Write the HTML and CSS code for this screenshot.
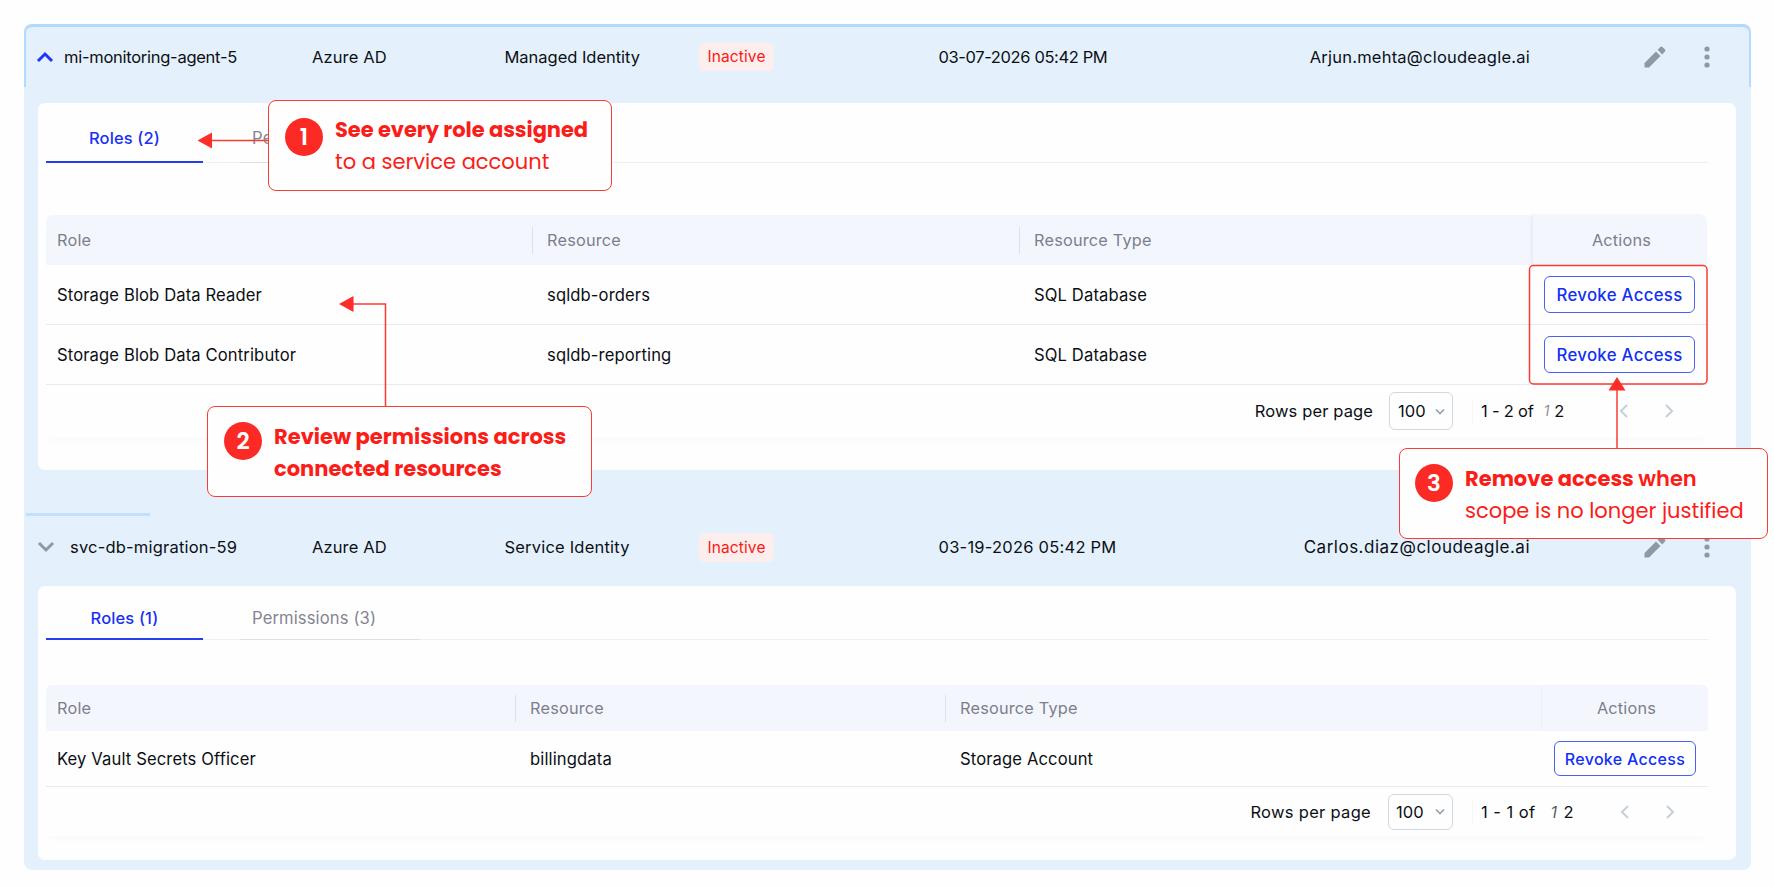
FILE: index.html
```html
<!DOCTYPE html>
<html lang="en">
<head>
  <meta charset="UTF-8">
  <meta name="viewport" content="width=device-width, initial-scale=1.0">
  <title>Service Accounts</title>
  <link rel="stylesheet" href="styles.css">
</head>
<body>
  <main class="accounts">
    <section class="account account-first">
      <div class="account-row">
        <svg class="toggle open" viewBox="0 0 18 12"><path d="M2 10 9 3l7 7"/></svg>
        <span class="name">mi-monitoring-agent-5</span>
        <span class="source">Azure AD</span>
        <span class="kind">Managed Identity</span>
        <span class="badge">Inactive</span>
        <span class="date">03-07-2026 05:42 PM</span>
        <span class="owner">Arjun.mehta@cloudeagle.ai</span>
        <svg class="pencil" viewBox="0 0 22 22"><path d="M0.500 17V21.500h4.500L16.500 10l-4.500-4.500zM21 5.600a1.500 1.500 0 0 0 0-2L18.400 1a1.500 1.500 0 0 0-2 0l-2.800 2.800 4.600 4.600z"/></svg>
        <svg class="dots" viewBox="0 0 6 22"><circle cx="3" cy="3" r="2.6"/><circle cx="3" cy="11" r="2.6"/><circle cx="3" cy="19" r="2.6"/></svg>
      </div>
      <div class="panel">
        <div class="tabs">
          <div class="tab active">Roles (2)</div>
          <div class="tab permissions">Permissions</div>
        </div>
        <div class="table">
          <div class="tr th">
            <span>Role</span><span>Resource</span><span>Resource Type</span><span class="actions">Actions</span>
          </div>
          <div class="tr">
            <span>Storage Blob Data Reader</span><span>sqldb-orders</span><span>SQL Database</span>
            <span class="actions"><button>Revoke Access</button></span>
          </div>
          <div class="tr">
            <span>Storage Blob Data Contributor</span><span>sqldb-reporting</span><span>SQL Database</span>
            <span class="actions"><button>Revoke Access</button></span>
          </div>
          <div class="pagination">
            <span class="per-page">Rows per page</span>
            <div class="select">100 <svg viewBox="0 0 10 7"><path d="M1 1.5l4 4 4-4"/></svg></div>
            <div class="range"><span>1 - 2 of</span><i>1</i><span>2</span></div>
            <svg class="page-nav" viewBox="0 0 28 16"><path d="M17 2l-6 6 6 6"/></svg>
            <svg class="page-nav" viewBox="0 0 28 16"><path d="M11 2l6 6-6 6"/></svg>
          </div>
        </div>
      </div>
    </section>

    <section class="account account-second">
      <div class="account-row">
        <svg class="toggle" viewBox="0 0 18 12"><path d="M2 2l7 7 7-7"/></svg>
        <span class="name">svc-db-migration-59</span>
        <span class="source">Azure AD</span>
        <span class="kind">Service Identity</span>
        <span class="badge">Inactive</span>
        <span class="date">03-19-2026 05:42 PM</span>
        <span class="owner">Carlos.diaz@cloudeagle.ai</span>
        <svg class="pencil" viewBox="0 0 22 22"><path d="M0.500 17V21.500h4.500L16.500 10l-4.500-4.500zM21 5.600a1.500 1.500 0 0 0 0-2L18.400 1a1.500 1.500 0 0 0-2 0l-2.800 2.800 4.600 4.600z"/></svg>
        <svg class="dots" viewBox="0 0 6 22"><circle cx="3" cy="3" r="2.6"/><circle cx="3" cy="11" r="2.6"/><circle cx="3" cy="19" r="2.6"/></svg>
      </div>
      <div class="panel">
        <div class="tabs">
          <div class="tab active">Roles (1)</div>
          <div class="tab permissions">Permissions (3)</div>
        </div>
        <div class="table">
          <div class="tr th">
            <span>Role</span><span>Resource</span><span>Resource Type</span><span class="actions">Actions</span>
          </div>
          <div class="tr">
            <span>Key Vault Secrets Officer</span><span>billingdata</span><span>Storage Account</span>
            <span class="actions"><button>Revoke Access</button></span>
          </div>
          <div class="pagination">
            <span class="per-page">Rows per page</span>
            <div class="select">100 <svg viewBox="0 0 10 7"><path d="M1 1.5l4 4 4-4"/></svg></div>
            <div class="range"><span>1 - 1 of</span><i>1</i><span>2</span></div>
            <svg class="page-nav" viewBox="0 0 28 16"><path d="M17 2l-6 6 6 6"/></svg>
            <svg class="page-nav" viewBox="0 0 28 16"><path d="M11 2l6 6-6 6"/></svg>
          </div>
        </div>
      </div>
    </section>
  </main>

  <!-- arrows and the highlight frame over the tables -->
  <svg class="arrows" viewBox="0 0 1774 887">
    <rect x="1529.5" y="265.5" width="177.5" height="118.5" rx="4"/>
    <path d="M269 140.5H210M385.500 406V304H351M1617 449V388"/>
    <path class="head" d="M197.500 140.500l14.500-8v16zM339 304l14.500-8v16zM1617 377l-8.500 13.500h17z"/>
  </svg>

  <div class="callout callout-1">
    <span class="number">1</span>
    <p><b>See every role assigned</b><br><span>to a service account</span></p>
  </div>
  <div class="callout callout-2">
    <span class="number">2</span>
    <p><b>Review permissions across</b><br><b>connected resources</b></p>
  </div>
  <div class="callout callout-3">
    <span class="number">3</span>
    <p><b>Remove access <em>when</em></b><br><span>scope is no longer justified</span></p>
  </div>
</body>
</html>
```

FILE: styles.css
```css
* { margin: 0; padding: 0; box-sizing: border-box; }
body {
  position: relative;
  width: 1774px; height: 887px;
  padding-top: 24px;
  overflow: hidden;
  background: #fefefe;
  color: #0c0f14;
  font-family: Inter, "Liberation Sans", sans-serif;
  font-size: 16.6px;
  line-height: 24px;
  letter-spacing: 0.12px;
  white-space: nowrap;
}
svg { display: block; flex: none; }

.accounts {
  width: 1727px;
  margin-left: 24px;
  padding-bottom: 10px;
  background: #e4f1fd;
  border-radius: 8px;
}

.account-row {
  display: grid;
  grid-template-columns: 40px 248px 192.500px 194.500px 239.500px 372px 219.500px 174px 1fr;
  align-items: center;
  height: 64px;
  border-bottom: 1px solid #e4eef5;
  font-size: 16.5px;
}
.account-first .account-row {
  border-top: 3px solid #b3d9fd;
  box-shadow: inset 2px 0 #b3d9fd, inset -2px 0 #b3d9fd;
  border-radius: 8px 8px 0 0;
}
.account-second {
  margin-top: 43px;
}
.account-second::before {
  content: "";
  display: block;
  width: 124px; height: 3px;
  margin-left: 2px;
  background: #bfe1fd;
}
.account-second .account-row { height: 61px; padding-top: 2px; }

.toggle {
  width: 18px; height: 12px;
  margin-left: 13px;
  fill: none; stroke: #8f99a6; stroke-width: 3;
}
.toggle.open { stroke: #1f35fa; margin-left: 12px; }
.name { letter-spacing: -0.27px; }
.account-second .name { padding-left: 6px; letter-spacing: 0.2px; }
.account-second .kind { letter-spacing: 0.2px; }
.account-first .kind { letter-spacing: -0.03px; }
.account-first .date { letter-spacing: -0.38px; }
.account-second .date { letter-spacing: 0.23px; }
.badge {
  justify-self: start;
  width: 75px;
  border-radius: 5px;
  background: #fdeeee;
  color: #fb1a14;
  font-size: 15.5px;
  line-height: 28px;
  text-align: center;
}
.account-second .badge { line-height: 29px; }
.owner { justify-self: end; letter-spacing: 0.23px; }
.account-second .owner { font-size: 17px; letter-spacing: 0.5px; }
.pencil { width: 22px; height: 22px; fill: #8d9aa6; margin-left: 114px; }
.dots { width: 6px; height: 22px; fill: #8d9aa6; }

.panel {
  margin: 15px 15.500px 0 14px;
  padding-left: 8px;
  height: 367px;
  background: #fefefe;
  border-radius: 7px;
}
.account-second .panel { margin-top: 9px; height: 274px; }

.tabs {
  display: flex;
  gap: 37px;
  width: 1663px; height: 60px;
  box-shadow: inset 0 -1px #f0f0f2;
}
.tab {
  width: 157px;
  padding-top: 23px;
  text-align: center;
  color: #858592;
}
.tab.active { color: #1a31f5; border-bottom: 2px solid #2440ee; font-size: 16.5px; font-weight: 500; }
.tab.permissions { width: 180px; padding-left: 12px; text-align: left; border-bottom: 1px solid #dedfe3; }
.account-second .tabs { height: 54px; }
.account-second .tab { padding-top: 20px; }

.table {
  width: 1661px;
  margin-top: 52px;
  box-shadow: 0 6px 8px -4px #f7f7f8;
}
.account-second .table { width: 1662px; margin-top: 45px; }
.tr {
  display: grid;
  grid-template-columns: 486px 487px 1fr 174px;
  align-items: center;
  height: 60px;
  border-bottom: 1px solid #e9eaec;
}
.account-second .tr { grid-template-columns: 469px 430px 1fr 166px; height: 56px; }
.tr > span { padding-left: 14px; border-left: 1px solid transparent; }
.tr > span:first-child { padding-left: 10px; }
.tr > .actions { padding-left: 0; border-left: none; }
.tr.th {
  height: 50px;
  border: none;
  border-radius: 6px 6px 0 0;
  background: #f4f6fe;
  color: #7c7e8d;
  letter-spacing: 0.2px;
  font-size: 16.3px;
}
.th > span { line-height: 27px; border-left-color: #dfe1e9; }
.th > span:first-child { border-left-color: transparent; }
.account-second .th { height: 46px; }
.th > .actions {
  align-self: stretch;
  display: grid;
  place-items: center;
  padding-left: 3px;
  border-radius: 0 6px 0 0;
  box-shadow: -2px 0 3px #e9ebf4;
}
.account-second .th > .actions { box-shadow: -1px 0 1px #eef0f7; }

button {
  display: block;
  width: 151px; height: 37px;
  margin-left: 11px;
  border: 1px solid #4a5ff5;
  border-radius: 6px;
  background: #fff;
  color: #1330f8;
  font: 500 16.8px Inter, sans-serif;
  letter-spacing: 0.3px;
}
.account-second button { width: 142px; height: 35px; margin-left: 12px; font-size: 16px; letter-spacing: 0.3px; }

.pagination {
  display: flex;
  align-items: center;
  justify-content: flex-end;
  height: 52px;
  padding-right: 24px;
  font-size: 16.5px;
}
.account-second .per-page { letter-spacing: 0.3px; }
.select {
  display: flex;
  align-items: center;
  justify-content: space-between;
  width: 64px; height: 38px;
  margin: 0 19px 0 16px;
  padding: 0 7px 0 8px;
  border: 1px solid #cfd9e0;
  border-radius: 6px;
}
.select svg { width: 10px; height: 7px; fill: none; stroke: #8fa2ae; stroke-width: 1.6; }
.range { display: flex; width: 138px; padding-left: 8px; border-left: 1px solid #f4f5f6; letter-spacing: -0.2px; }
.range i { margin: 0 5px 0 10px; font-size: 14px; color: #8b8f96; }
.page-nav { width: 28px; height: 16px; fill: none; stroke: #c6d0d8; stroke-width: 2; }
.page-nav + .page-nav { margin-left: 17px; }
.account-second .pagination { height: 49px; padding-right: 24px; }
.account-second .select { width: 65px; height: 36px; margin-left: 17px; padding-left: 7px; }
.account-second .range { width: 139px; letter-spacing: 0.45px; }
.account-second .range i { margin: 0 6px 0 15px; font-size: 16px; color: #5a5e66; }

.arrows {
  position: absolute;
  left: 0; top: 0;
  width: 1774px; height: 887px;
  fill: none; stroke: #fb3b32; stroke-width: 1.5;
}
.arrows .head { fill: #fb2f28; stroke: none; }

.callout {
  position: absolute;
  display: flex;
  height: 91px;
  padding: 14px 0 0 16px;
  background: #fefefe;
  border: 1.500px solid #fb3b32;
  border-radius: 8px;
  color: #fa1d18;
  font-family: Poppins, Inter, sans-serif;
  font-size: 21px;
  line-height: 32px;
  letter-spacing: 0;
}
.callout-1 { left: 268px; top: 100px; width: 344px; padding-top: 13px; }
.callout-1 b { letter-spacing: -0.06px; }
.callout-2 { left: 207px; top: 406px; width: 385px; }
.callout-3 { left: 1399px; top: 448px; width: 369px; padding-left: 15px; }
.callout b { font-weight: 700; }
.callout em { font-style: normal; font-weight: 600; }
.number {
  width: 38px; height: 38px;
  margin: 4px 12px 0 0;
  border-radius: 50%;
  background: #fc2a24;
  color: #fff;
  font-size: 23px;
  font-weight: 600;
  line-height: 39px;
  text-align: center;
}
.callout-2 .number, .callout-3 .number { margin-top: 1px; }
```
